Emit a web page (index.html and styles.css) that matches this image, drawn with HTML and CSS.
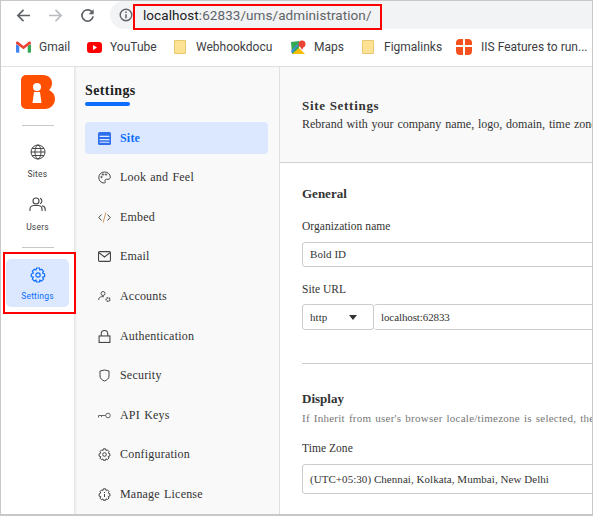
FILE: index.html
```html
<!DOCTYPE html>
<html lang="en">
<head>
    <meta charset="UTF-8">
    <meta name="viewport" content="width=device-width, initial-scale=1.0">
    <title>Site Settings</title>
    <link rel="stylesheet" href="styles.css">
</head>
<body>
    <div class="frame">
        <header class="browser">
            <div class="toolbar">
                <svg class="nav-icon" viewBox="0 0 16 16"><path d="M15 8H2M8 2L2 8l6 6" fill="none" stroke="#5f6368" stroke-width="1.8"/></svg>
                <svg class="nav-icon" viewBox="0 0 16 16"><path d="M1 8h13M8 2l6 6-6 6" fill="none" stroke="#b9bcc0" stroke-width="1.8"/></svg>
                <svg class="nav-icon" viewBox="0 0 16 16"><path d="M13.4 5.2A6 6 0 1 0 14 9" fill="none" stroke="#5f6368" stroke-width="1.8"/><path d="M14.6 1.2v5.4H9.2z" fill="#5f6368"/></svg>
                <div class="omnibox">
                    <svg class="info-icon" viewBox="0 0 14 14"><circle cx="7" cy="7" r="5.8" fill="none" stroke="#5f6368" stroke-width="1.4"/><path d="M7 6.2v4M7 3.6v1.4" stroke="#5f6368" stroke-width="1.5"/></svg>
                    <span class="url"><b>localhost</b>:62833/ums/administration/</span>
                </div>
                <div class="url-mark"></div>
            </div>
            <nav class="bookmarks">
                <a class="bookmark b-gmail">
                    <svg viewBox="0 0 16 12" width="15" height="12"><path d="M0 3v8a1 1 0 0 0 1 1h2.5V5z" fill="#4285f4"/><path d="M16 3v8a1 1 0 0 1-1 1h-2.5V5z" fill="#34a853"/><path d="M0 2.5V1.6C0 .4 1.3-.3 2.300.4L8 5l5.700-4.600c1-.7 2.300 0 2.300 1.200v.9L12.500 5 8 8.500 3.500 5z" fill="#ea4335"/></svg>
                    Gmail
                </a>
                <a class="bookmark b-youtube">
                    <svg viewBox="0 0 15 11" width="15" height="11"><rect width="15" height="11" rx="3" fill="#f00"/><path d="M6 3l4 2.500L6 8z" fill="#fff"/></svg>
                    YouTube
                </a>
                <a class="bookmark b-webhook">
                    <svg class="folder" viewBox="0 0 12 14" width="12" height="14"><path d="M.5.5h11v13H.5z" fill="#fde293" stroke="#e8c870"/></svg>
                    Webhookdocu
                </a>
                <a class="bookmark b-maps">
                    <svg viewBox="0 0 15 15" width="15" height="15"><path d="M0 2l8-1v13H1z" fill="#34a853"/><path d="M1 14l7-6 6 6z" fill="#fbbc04"/><path d="M0 11l8-8h1L1 13z" fill="#4285f4"/><circle cx="11" cy="4" r="3.500" fill="#ea4335"/><path d="M9 6l2 4 2-4z" fill="#ea4335"/></svg>
                    Maps
                </a>
                <a class="bookmark b-figma">
                    <svg class="folder" viewBox="0 0 12 14" width="12" height="14"><path d="M.5.5h11v13H.5z" fill="#fde293" stroke="#e8c870"/></svg>
                    Figmalinks
                </a>
                <a class="bookmark b-iis">
                    <svg viewBox="0 0 16 16" width="16" height="16"><rect width="16" height="16" rx="4" fill="#f4511e"/><path d="M7 0h2v16H7zM0 6h16v2H0z" fill="#fff"/></svg>
                    IIS Features to run...
                </a>
            </nav>
        </header>

        <div class="app">
            <aside class="rail">
                <svg class="logo" viewBox="0 0 34 34" width="34" height="34"><path d="M5 0h17c6 0 9 4 9 8 0 3-1 5-3 7 4 2 6 5 6 9 0 6-5 10-10 10H5a5 5 0 0 1-5-5V5a5 5 0 0 1 5-5z" fill="#ff4f00"/><circle cx="16" cy="12" r="4" fill="#fff"/><path d="M13 17h6l1.500 11h-9z" fill="#fff"/></svg>
                <hr class="rail-line first">
                <a class="rail-item">
                    <svg viewBox="0 0 16 16" width="16" height="16" fill="none" stroke="#444" stroke-width="1"><circle cx="8" cy="8" r="7"/><ellipse cx="8" cy="8" rx="3" ry="7"/><path d="M1 8h14M2 4.500h12M2 11.500h12"/></svg>
                    <span>Sites</span>
                </a>
                <a class="rail-item">
                    <svg viewBox="0 0 17 16" width="17" height="16" fill="none" stroke="#444" stroke-width="1.100"><circle cx="7" cy="4" r="3"/><path d="M1 14v-2c0-2 2-3.500 4-3.500h4c2 0 4 1.500 4 3.500v2M11 1.200a3 3 0 0 1 0 5.600M13 8.800c2 .3 3.200 1.700 3.200 3.400V14"/></svg>
                    <span>Users</span>
                </a>
                <hr class="rail-line second">
                <a class="rail-item active">
                    <svg viewBox="0 0 16 16" width="16" height="16" fill="none" stroke="#0d6efd" stroke-width="1.200"><circle cx="8" cy="8" r="2.200"/><path d="M6.600 1h2.800l.5 2 1.700-.7 1.900 2-.9 1.700 2 1v2.600l-2 .6.900 1.900-1.900 2-1.700-.9-.5 1.800H6.600l-.6-1.800-1.700.9-1.900-2 .9-1.900-2-.6V7l2-1-.9-1.700 1.900-2L6 3z"/></svg>
                    <span>Settings</span>
                </a>
            </aside>
            <div class="settings-mark"></div>

            <section class="panel">
                <h2 class="panel-title">Settings</h2>
                <ul class="menu">
                    <li class="menu-item active">
                        <svg viewBox="0 0 12 12"><rect width="12" height="12" rx="1.500" fill="#2f6fed"/><path d="M1.500 4h9M1.500 7h9M1.500 9.500h9" stroke="#dbe8ff" stroke-width="1"/></svg>
                        Site
                    </li>
                    <li class="menu-item">
                        <svg viewBox="0 0 13 13" fill="none" stroke="#444" stroke-width="1"><path d="M6.500 1C3 1 .8 3.500.8 6.500S3 12 6 12c1.500 0 1.500-1 1-2-.3-1 .3-1.700 1.500-1.700H10c1.700 0 2.300-1.100 2.300-2.300C12.300 3 9.500 1 6.500 1z"/><circle cx="3.500" cy="6" r=".7"/><circle cx="5" cy="3.500" r=".7"/><circle cx="8" cy="3.500" r=".7"/></svg>
                        Look and Feel
                    </li>
                    <li class="menu-item">
                        <svg viewBox="0 0 13 13" fill="none" stroke="#444" stroke-width="1"><path d="M3.500 3.500L.8 6.500l2.700 3M9.500 3.500l2.700 3-2.700 3"/><path d="M7.800 1.500l-2.600 10" stroke="#c96"/></svg>
                        Embed
                    </li>
                    <li class="menu-item">
                        <svg viewBox="0 0 12 12" fill="none" stroke="#444" stroke-width="1"><rect x=".5" y="1.500" width="11" height="9" rx="1"/><path d="M1 2.500l5 4 5-4"/></svg>
                        Email
                    </li>
                    <li class="menu-item">
                        <svg viewBox="0 0 13 13" fill="none" stroke="#555" stroke-width="1"><circle cx="5" cy="3.500" r="2"/><path d="M.8 10V9c0-1.500 1.500-2.300 3-2.300H6"/><circle cx="10" cy="9.500" r="1.800" stroke-dasharray="1.500 .6" stroke-width="1.400"/></svg>
                        Accounts
                    </li>
                    <li class="menu-item">
                        <svg viewBox="0 0 12 12" fill="none" stroke="#444" stroke-width="1"><rect x="1" y="5.500" width="10" height="6"/><path d="M3 5.500V3.500a3 3 0 0 1 6 0v2"/></svg>
                        Authentication
                    </li>
                    <li class="menu-item">
                        <svg viewBox="0 0 12 13" fill="none" stroke="#444" stroke-width="1"><path d="M1.500 2l4.500-1 4.500 1v5c0 2.500-2.200 4.300-4.500 5-2.300-.7-4.500-2.500-4.500-5z"/></svg>
                        Security
                    </li>
                    <li class="menu-item">
                        <svg viewBox="0 0 13 8" fill="none" stroke="#666" stroke-width="1"><circle cx="10" cy="4" r="2.300"/><path d="M7.700 4H.5v2M3.500 4v1.500"/></svg>
                        API Keys
                    </li>
                    <li class="menu-item">
                        <svg viewBox="0 0 13 13" fill="none" stroke="#444" stroke-width="1"><circle cx="6.500" cy="6.500" r="1.800"/><path d="M5.400 .8h2.200l.4 1.700 1.400-.6 1.600 1.600-.8 1.400 1.700.9v2.200l-1.700.5.8 1.500-1.600 1.600-1.400-.8-.4 1.500H5.400L5 10.900l-1.400.8L2 10.100l.8-1.500-1.700-.5V5.900l1.700-.9L2 3.600 3.600 1.900l1.400.6z"/></svg>
                        Configuration
                    </li>
                    <li class="menu-item">
                        <svg viewBox="0 0 13 13" fill="none" stroke="#444" stroke-width="1"><path d="M6.500 6v3M6.500 4v1"/><path d="M5.400 .8h2.200l.4 1.700 1.400-.6 1.600 1.600-.8 1.400 1.700.9v2.200l-1.700.5.8 1.500-1.600 1.600-1.400-.8-.4 1.500H5.400L5 10.900l-1.400.8L2 10.100l.8-1.500-1.700-.5V5.900l1.700-.9L2 3.600 3.600 1.900l1.400.6z"/></svg>
                        Manage License
                    </li>
                </ul>
            </section>

            <main class="content">
                <div class="content-head">
                    <h1>Site Settings</h1>
                    <p>Rebrand with your company name, logo, domain, time zone and other preferences for your site.</p>
                </div>
                <div class="content-body">
                    <h3>General</h3>
                    <label class="field-label">Organization name</label>
                    <div class="input">Bold ID</div>
                    <label class="field-label url-label">Site URL</label>
                    <div class="url-row">
                        <div class="input scheme">http<i class="caret"></i></div>
                        <div class="input domain">localhost:62833</div>
                    </div>
                    <hr class="divider">
                    <h3>Display</h3>
                    <p class="hint">If Inherit from user's browser locale/timezone is selected, the site will follow the settings of the browser.</p>
                    <label class="field-label zone-label">Time Zone</label>
                    <div class="input zone">(UTC+05:30) Chennai, Kolkata, Mumbai, New Delhi</div>
                </div>
            </main>
        </div>
    </div>
</body>
</html>
```

FILE: styles.css
```css
* {
    box-sizing: border-box;
}
html, body {
    margin: 0;
    height: 100%;
    overflow: hidden;
}
body {
    font-family: "Liberation Serif", serif;
    background-color: #fff;
    color: #333;
}
.frame {
    position: relative;
    width: 593px;
    height: 516px;
    border: 1px solid #c8c8c8;
    border-width: 1px 1px 2px 1px;
    overflow: hidden;
}

/* browser chrome */
.browser {
    height: 65px;
    font-family: "Roboto", "Liberation Sans", sans-serif;
}
.toolbar {
    display: flex;
    align-items: center;
    height: 28px;
    padding-left: 15px;
}
.nav-icon {
    width: 15px;
    height: 15px;
    margin-right: 17px;
    flex: none;
}
.omnibox {
    display: flex;
    align-items: center;
    flex: 1;
    height: 28px;
    margin-left: -2px;
    padding-left: 9px;
    background-color: #f1f3f4;
    border-radius: 14px 0 0 14px;
}
.info-icon {
    width: 14px;
    height: 14px;
    margin-right: 10px;
}
.url {
    font-size: 13.500px;
    letter-spacing: 0.07px;
    color: #5f6368;
}
.url b {
    font-weight: 400;
    color: #202124;
}
.url-mark {
    position: absolute;
    left: 132px;
    top: 3px;
    width: 249px;
    height: 26px;
    border: 2px solid #f00;
}
.bookmarks {
    display: flex;
    align-items: center;
    height: 36px;
    padding-left: 15px;
    white-space: nowrap;
    font-size: 12px;
    color: #3c4043;
}
.bookmark {
    display: flex;
    align-items: center;
    gap: 8px;
}
.folder {
    margin-right: 2px;
}
.b-gmail { width: 71px; }
.b-youtube { width: 87px; }
.b-webhook { width: 117px; }
.b-maps { width: 71px; }
.b-figma { width: 94px; }
.b-iis { gap: 9px; }

/* app */
.app {
    position: relative;
    display: flex;
    height: 449px;
    border-top: 1px solid #e0e0e0;
}
.rail {
    flex: none;
    width: 73px;
    display: flex;
    flex-direction: column;
    align-items: center;
    padding-top: 8px;
    background-color: #fff;
}
.logo {
    flex: none;
    margin-bottom: 16px;
}
.rail-line {
    flex: none;
    width: 32px;
    margin: 0;
    border: none;
    border-top: 1px solid #c8c8c8;
}
.rail-line.first {
    margin-bottom: 18px;
}
.rail-line.second {
    margin-top: 14px;
    margin-bottom: 11px;
}
.rail-item {
    display: flex;
    flex-direction: column;
    align-items: center;
    gap: 9px;
    width: 63px;
    font-family: "Roboto", sans-serif;
    font-size: 8.500px;
    line-height: 11px;
    letter-spacing: 0.2px;
    color: #444;
}
.rail-item + .rail-item {
    margin-top: 17px;
}
.rail-item.active {
    height: 48px;
    padding-top: 8px;
    gap: 8px;
    background-color: #dbe8ff;
    border-radius: 5px;
    color: #0d6efd;
}
.settings-mark {
    position: absolute;
    left: 2px;
    top: 185px;
    width: 73px;
    height: 62px;
    border: 2px solid #f00;
}
.panel {
    flex: none;
    width: 206px;
    padding: 15px 11px 0;
    background-color: #f9f9f9;
    border-right: 1px solid #e0e0e0;
    box-shadow: inset 3px 0 3px -2px #ddd;
}
.panel-title {
    margin: 0 0 16px;
    font-size: 14px;
    line-height: 18px;
    letter-spacing: 0.4px;
    color: #222;
}
.panel-title::after {
    content: "";
    display: block;
    width: 45px;
    height: 4px;
    margin-top: 2px;
    background-color: #0d6efd;
    border-radius: 2px;
}
.menu {
    margin: 0;
    padding: 0;
    list-style: none;
}
.menu-item {
    display: flex;
    align-items: center;
    gap: 9px;
    height: 39.600px;
    padding-left: 13px;
    font-size: 12px;
    letter-spacing: 0.2px;
    word-spacing: 1px;
    color: #333;
}
.menu-item svg {
    flex: none;
    width: 13px;
    height: 13px;
}
.menu-item.active {
    height: 32px;
    margin-bottom: 4px;
    border-radius: 4px;
    background-color: #dbe8ff;
    color: #0d6efd;
    font-weight: 700;
}
.content {
    flex: 1;
    min-width: 0;
    overflow: hidden;
    white-space: nowrap;
}
.content-head {
    height: 96px;
    padding: 30px 22px 0;
    background-color: #f9f9f9;
    border-bottom: 1px solid #d0d0d0;
}
.content-head h1 {
    margin: 0 0 2px;
    font-size: 13px;
    line-height: 17px;
    letter-spacing: 0.7px;
}
.content-head p {
    margin: 0;
    font-size: 12px;
    line-height: 17px;
    letter-spacing: 0;
    word-spacing: 0.8px;
}
.content-body {
    padding: 22px 0 0 22px;
}
.content-body h3 {
    margin: 0;
    font-size: 13px;
    line-height: 17px;
}
.field-label {
    display: block;
    margin: 17px 0 9px;
    font-size: 11.500px;
    line-height: 14px;
    letter-spacing: 0.05px;
}
.url-label {
    margin-top: 15px;
    margin-bottom: 8px;
}
.input {
    width: 320px;
    height: 25px;
    padding-left: 7px;
    border: 1px solid #ccc;
    border-radius: 3px;
    font-size: 11px;
    line-height: 23px;
    letter-spacing: 0.05px;
}
.url-row {
    display: flex;
}
.scheme {
    position: relative;
    flex: none;
    width: 72px;
    height: 26px;
    line-height: 24px;
}
.caret {
    position: absolute;
    left: 46px;
    top: 10px;
    border: 4px solid transparent;
    border-top: 5px solid #333;
    border-bottom: none;
    width: 0;
}
.domain {
    flex: none;
    width: 300px;
    height: 26px;
    line-height: 24px;
    border-left: none;
    letter-spacing: -0.1px;
}
.divider {
    width: 320px;
    margin: 33px 0 26px;
    border: none;
    border-top: 1px solid #ccc;
}
.hint {
    margin: 4px 0 0;
    font-size: 11px;
    line-height: 15px;
    letter-spacing: 0.25px;
    word-spacing: 1px;
    color: #777;
}
.zone-label {
    margin-top: 15px;
    margin-bottom: 9px;
}
.zone {
    height: 30px;
    line-height: 28px;
}
```
